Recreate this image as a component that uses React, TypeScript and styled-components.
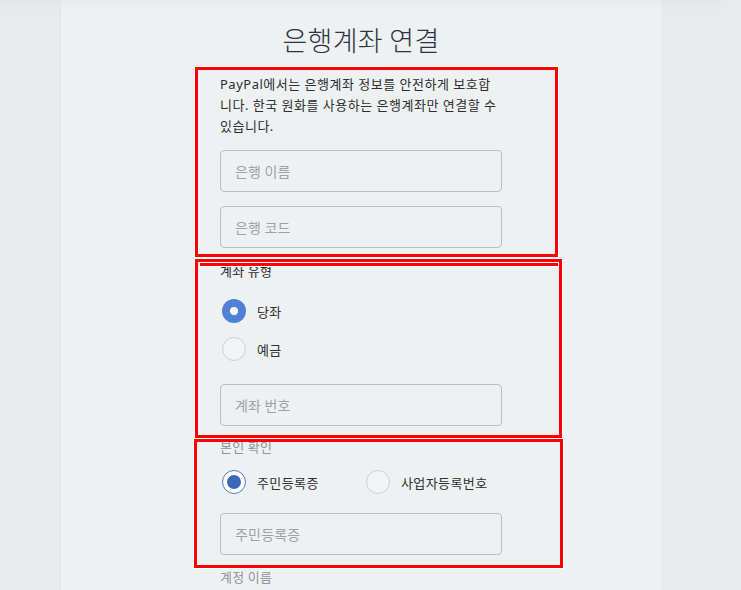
import React from 'react'
import styled, { createGlobalStyle } from 'styled-components'

const GlobalStyle = createGlobalStyle`
	html, body {
		margin: 0;
		padding: 0;
		background: #e7ebee;
	}
	body {
		font-family: 'Noto Sans', 'Noto Sans CJK KR', sans-serif;
		color: #2c2e2f;
	}
`

const Page = styled.div`
	width: 721px;
	height: 590px;
	overflow: hidden;
	display: flex;
	justify-content: center;
	background: linear-gradient(#e3e7ea 0, #e7ebee 12px);
`

const Panel = styled.main`
	position: relative;
	width: 600px;
	height: 590px;
	border-left: 1px solid #e2e6e9;
	background: linear-gradient(#e9ecee 0, #eef1f2 12px);
	display: flex;
	flex-direction: column;
	align-items: center;
`

const Title = styled.h1`
	margin: 22px 0 0;
	font-family: 'Noto Sans CJK KR', sans-serif;
	font-size: 27px;
	line-height: 36px;
	font-weight: 300;
	color: #2d3444;
	letter-spacing: 0.3px;
`

const Form = styled.form`
	width: 282px;
	display: flex;
	flex-direction: column;
`

const Intro = styled.p`
	margin: 16px 0 0;
	font-size: 13px;
	line-height: 21px;
	letter-spacing: 0.5px;
	color: #2c2e2f;
	white-space: nowrap;
`

const Field = styled.input<{ $gap: number }>`
	box-sizing: border-box;
	margin-top: ${(p) => p.$gap}px;
	width: 282px;
	height: 42px;
	padding: 0 14px;
	border: 1px solid #b9bec1;
	border-radius: 4px;
	background: #eef1f2;
	font-family: 'Noto Sans CJK KR', sans-serif;
	font-size: 14px;
	letter-spacing: 0.2px;
	color: #2c2e2f;
	outline: none;
	&::placeholder {
		color: #9ca2a6;
	}
`

const Label = styled.div<{ $gap: number; $muted?: boolean }>`
	margin-top: ${(p) => p.$gap}px;
	font-family: 'Noto Sans CJK KR', sans-serif;
	font-size: 13px;
	line-height: 20px;
	letter-spacing: 0.3px;
	color: ${(p) => (p.$muted ? '#8e9499' : '#2c2e2f')};
`

const RadioRow = styled.div<{ $gap: number }>`
	margin-top: ${(p) => p.$gap}px;
	display: flex;
	align-items: center;
	height: 24px;
`

const RadioOption = styled.label<{ $width?: number }>`
	display: flex;
	align-items: center;
	gap: 11px;
	width: ${(p) => (p.$width ? `${p.$width}px` : 'auto')};
	margin-left: 2px;
	font-family: 'Noto Sans CJK KR', sans-serif;
	font-size: 13px;
	letter-spacing: 0.4px;
	color: #2c2e2f;
`

type RadioKind = 'filled' | 'ring' | 'off'

const RadioDot = styled.span<{ $kind: RadioKind }>`
	box-sizing: border-box;
	width: 24px;
	height: 24px;
	border-radius: 50%;
	flex: none;
	display: flex;
	align-items: center;
	justify-content: center;
	border: ${(p) =>
		p.$kind === 'filled' ? 'none' : p.$kind === 'ring' ? '1.5px solid #4d78c6' : '1px solid #cbd0d3'};
	background: ${(p) => (p.$kind === 'filled' ? '#4f81d7' : p.$kind === 'ring' ? '#ffffff' : '#f1f3f4')};
	&::after {
		content: '';
		display: ${(p) => (p.$kind === 'off' ? 'none' : 'block')};
		width: ${(p) => (p.$kind === 'filled' ? 8 : 14)}px;
		height: ${(p) => (p.$kind === 'filled' ? 8 : 14)}px;
		border-radius: 50%;
		background: ${(p) => (p.$kind === 'filled' ? '#ffffff' : '#3c67b8')};
	}
`

// red review marks drawn over the form
const ReviewMark = styled.div<{ $top: number; $left: number; $w: number; $h: number }>`
	position: absolute;
	top: ${(p) => p.$top}px;
	left: ${(p) => p.$left}px;
	width: ${(p) => p.$w}px;
	height: ${(p) => p.$h}px;
	box-sizing: border-box;
	border: 3px solid #ff0000;
	box-shadow: 0 0 0 1px #ffffff;
	pointer-events: none;
`

const ReviewStroke = styled.div`
	position: absolute;
	top: 263px;
	left: 139px;
	width: 358px;
	height: 3px;
	background: #ff0000;
	box-shadow: 0 0 0 1px #ffffff;
	pointer-events: none;
`

export default function App() {
	return (
		<>
			<GlobalStyle />
			<Page>
				<Panel>
					<Title>은행계좌 연결</Title>
					<Form>
						<Intro>
							PayPal에서는 은행계좌 정보를 안전하게 보호합
							<br />
							니다. 한국 원화를 사용하는 은행계좌만 연결할 수
							<br />
							있습니다.
						</Intro>
						<Field $gap={13} placeholder="은행 이름" />
						<Field $gap={14} placeholder="은행 코드" />

						<Label $gap={13}>계좌 유형</Label>
						<RadioRow $gap={18}>
							<RadioOption>
								<RadioDot $kind="filled" />
								당좌
							</RadioOption>
						</RadioRow>
						<RadioRow $gap={14}>
							<RadioOption>
								<RadioDot $kind="off" />
								예금
							</RadioOption>
						</RadioRow>
						<Field $gap={23} placeholder="계좌 번호" />

						<Label $gap={11} $muted>
							본인 확인
						</Label>
						<RadioRow $gap={13}>
							<RadioOption $width={142}>
								<RadioDot $kind="ring" />
								주민등록증
							</RadioOption>
							<RadioOption>
								<RadioDot $kind="off" />
								사업자등록번호
							</RadioOption>
						</RadioRow>
						<Field $gap={19} placeholder="주민등록증" />

						<Label $gap={12} $muted>
							계정 이름
						</Label>
					</Form>

					<ReviewMark $top={67} $left={134} $w={363} $h={190} />
					<ReviewMark $top={259} $left={134} $w={367} $h={179} />
					<ReviewStroke />
					<ReviewMark $top={439} $left={133} $w={369} $h={129} />
				</Panel>
			</Page>
		</>
	)
}
